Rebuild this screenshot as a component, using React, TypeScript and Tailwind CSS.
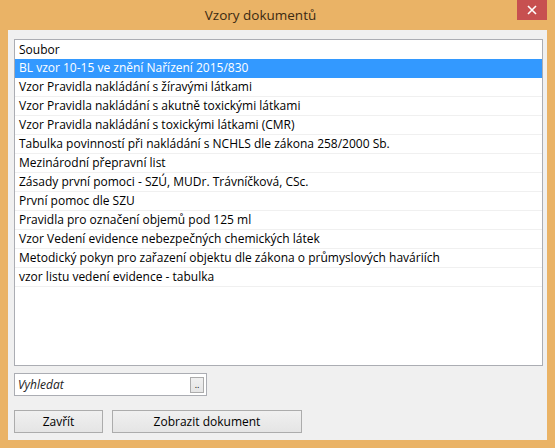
import React, { useState } from 'react';

// Document list shown in the dialog
const documents: string[] = [
  'BL vzor 10-15 ve znění Nařízení 2015/830',
  'Vzor Pravidla nakládání s žíravými látkami',
  'Vzor Pravidla nakládání s akutně toxickými látkami',
  'Vzor Pravidla nakládání s toxickými látkami (CMR)',
  'Tabulka povinností při nakládání s NCHLS dle zákona 258/2000 Sb.',
  'Mezinárodní přepravní list',
  'Zásady první pomoci - SZÚ, MUDr. Trávníčková, CSc.',
  'První pomoc dle SZU',
  'Pravidla pro označení objemů pod 125 ml',
  'Vzor Vedení evidence nebezpečných chemických látek',
  'Metodický pokyn pro zařazení objektu dle zákona o průmyslových haváriích',
  'vzor listu vedení evidence - tabulka',
];

const App: React.FC = () => {
  const [selected, setSelected] = useState(0);

  return (
    <div
      className="w-[555px] h-[448px] bg-[#eab366] flex flex-col text-[12px] text-black"
      style={{ fontFamily: '"Open Sans", "Noto Sans", sans-serif' }}
    >
      {/* Title bar */}
      <div className="h-[30px] flex shrink-0">
        <div className="flex-1 text-center pt-[5px] text-[13.5px] text-[#3b2a12] leading-[20px] pl-[4px]">
          Vzory dokumentů
        </div>
        <div className="pr-[8px]">
          <button className="w-[30px] h-[20px] bg-[#c75050] flex items-center justify-center">
            <svg width="10" height="10" viewBox="0 0 10 10">
              <path d="M1 1 L9 9 M9 1 L1 9" stroke="#fff" strokeWidth="1.6" />
            </svg>
          </button>
        </div>
      </div>

      {/* Client area */}
      <div className="mx-[8px] h-[410px] bg-[#f0f0f0] flex flex-col px-[6px] pt-[9px]">
        {/* List */}
        <div className="h-[327px] w-[529px] bg-white border border-[#abadb3] flex flex-col">
          <div className="h-[19px] leading-[19px] pl-[4px] shrink-0">Soubor</div>
          {documents.map((doc, idx) => (
            <div
              key={idx}
              onClick={() => setSelected(idx)}
              className={`h-[19px] leading-[18px] pl-[4px] shrink-0 whitespace-nowrap border-b ${
                idx === selected ? 'bg-[#3399ff] text-white border-[#3399ff]' : 'border-[#f0f0f0]'
              }`}
            >
              {doc}
            </div>
          ))}
        </div>

        {/* Search */}
        <div className="mt-[7px] w-[193px] h-[23px] bg-white border border-[#abadb3] flex items-center justify-between pl-[3px] pr-[2px]">
          <span className="italic text-[#222]">Vyhledat</span>
          <button className="w-[14px] h-[16px] border border-[#acacac] bg-gradient-to-b from-[#f0f0f0] to-[#e5e5e5] text-[9px] leading-[10px] flex items-end justify-center pb-[2px]">
            ..
          </button>
        </div>

        {/* Buttons */}
        <div className="mt-[14px] flex gap-[9px]">
          <button className="w-[89px] h-[23px] border border-[#acacac] bg-gradient-to-b from-[#f0f0f0] to-[#e5e5e5]">
            Zavřít
          </button>
          <button className="w-[190px] h-[23px] border border-[#acacac] bg-gradient-to-b from-[#f0f0f0] to-[#e5e5e5]">
            Zobrazit dokument
          </button>
        </div>
      </div>
    </div>
  );
};

export default App;
